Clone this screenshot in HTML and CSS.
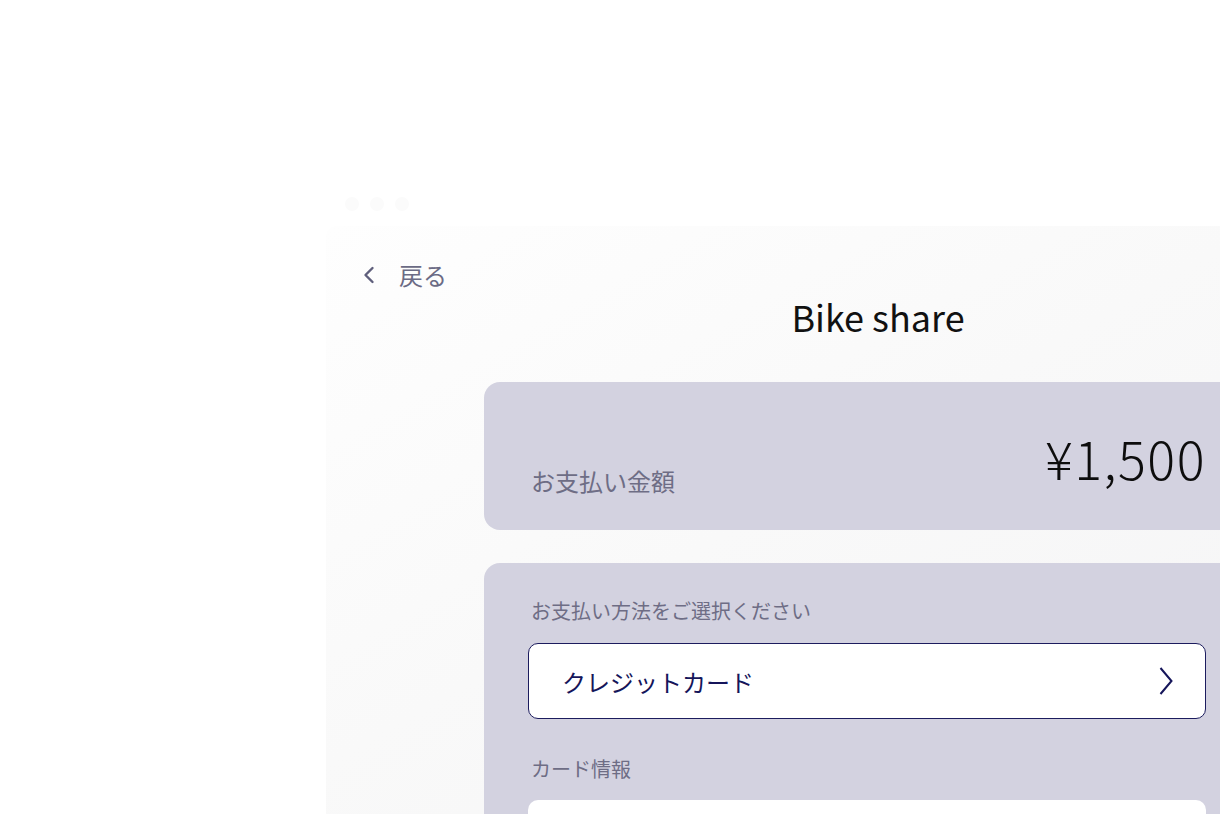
FILE: index.html
```html
<!DOCTYPE html>
<html lang="ja">
<head>
<meta charset="utf-8">
<title>Bike share</title>
<link rel="stylesheet" href="styles.css">
</head>
<body>
<div class="stage">
  <div class="dots"><span class="dot"></span><span class="dot"></span><span class="dot"></span></div>
  <div class="window">
    <div class="back">
      <svg class="back-icon" width="14" height="18" viewBox="0 0 14 18"><path d="M10.5 2 L3.5 9 L10.5 16" fill="none" stroke="#5f5f7c" stroke-width="2.4" stroke-linecap="round" stroke-linejoin="round"/></svg>
      <span class="back-text">戻る</span>
    </div>
    <div class="content">
      <h1 class="title">Bike share</h1>
      <div class="card amount-card">
        <span class="amount-label">お支払い金額</span>
        <span class="amount">¥1,500</span>
      </div>
      <div class="card pay-card">
        <div class="label">お支払い方法をご選択ください</div>
        <div class="select">
          <span class="select-text">クレジットカード</span>
          <svg class="select-icon" width="14" height="28" viewBox="0 0 14 28"><path d="M1.5 1 L12.5 14 L1.5 27" fill="none" stroke="#15155a" stroke-width="2"/></svg>
        </div>
        <div class="label label-card">カード情報</div>
        <div class="field"></div>
      </div>
    </div>
  </div>
</div>
</body>
</html>
```
FILE: styles.css
```css
html, body {
  margin: 0;
  padding: 0;
  background: #ffffff;
  overflow: hidden;
  height: 814px;
}
body {
  font-family: "Noto Sans CJK JP", "Noto Sans", sans-serif;
  color: #111;
}
.stage {
  padding: 197px 0 0 326px;
}
.dots {
  display: flex;
  gap: 11px;
  margin-left: 19px;
  height: 14px;
}
.dot {
  width: 14px;
  height: 14px;
  border-radius: 50%;
  background: #fbfbfb;
}
.window {
  margin-top: 15px;
  width: 960px;
  height: 640px;
  border-radius: 10px 0 0 0;
  background: linear-gradient(150deg, #fefefe 0%, #f9f9f9 45%, #f4f4f5 100%);
  padding-top: 34px;
  box-sizing: border-box;
}
.back {
  display: flex;
  align-items: center;
  height: 30px;
  padding-left: 36px;
  gap: 23px;
}
.back-icon { display: block; }
.back-text {
  font-size: 24px;
  color: #6b6b85;
  line-height: 30px;
}
.content {
  margin-left: 158px;
  width: 768px;
}
.title {
  margin: 0;
  font-weight: 400;
  font-size: 36px;
  line-height: 44px;
  text-align: center;
  padding-left: 20px;
  padding-top: 4px;
  color: #111;
}
.card {
  background: #d3d2e0;
  border-radius: 16px;
}
.amount-card {
  margin-top: 44px;
  height: 148px;
  box-sizing: border-box;
  display: flex;
  justify-content: space-between;
  align-items: flex-end;
  padding: 0 47px 32px 47px;
}
.amount-label {
  font-size: 24px;
  line-height: 34px;
  color: #6e6d85;
}
.amount {
  font-size: 52px;
  font-weight: 300;
  letter-spacing: 1.5px;
  line-height: 60px;
  color: #0d0d0d;
  margin-bottom: 10px;
  margin-right: -1px;
}
.pay-card {
  margin-top: 33px;
  padding: 33px 46px 0 44px;
  height: 300px;
}
.label {
  font-size: 20px;
  line-height: 30px;
  color: #6e6d85;
  padding-left: 3px;
}
.select {
  margin-top: 17px;
  height: 76px;
  box-sizing: border-box;
  border: 1px solid #1c1c5e;
  border-radius: 10px;
  background: #fff;
  display: flex;
  align-items: center;
  justify-content: space-between;
  padding: 0 32px 0 33px;
}
.select-text {
  font-size: 24px;
  color: #15155a;
}
.select-icon { display: block; }
.label-card {
  margin-top: 35px;
}
.field {
  margin-top: 16px;
  height: 80px;
  background: #fff;
  border-radius: 10px;
}
```
